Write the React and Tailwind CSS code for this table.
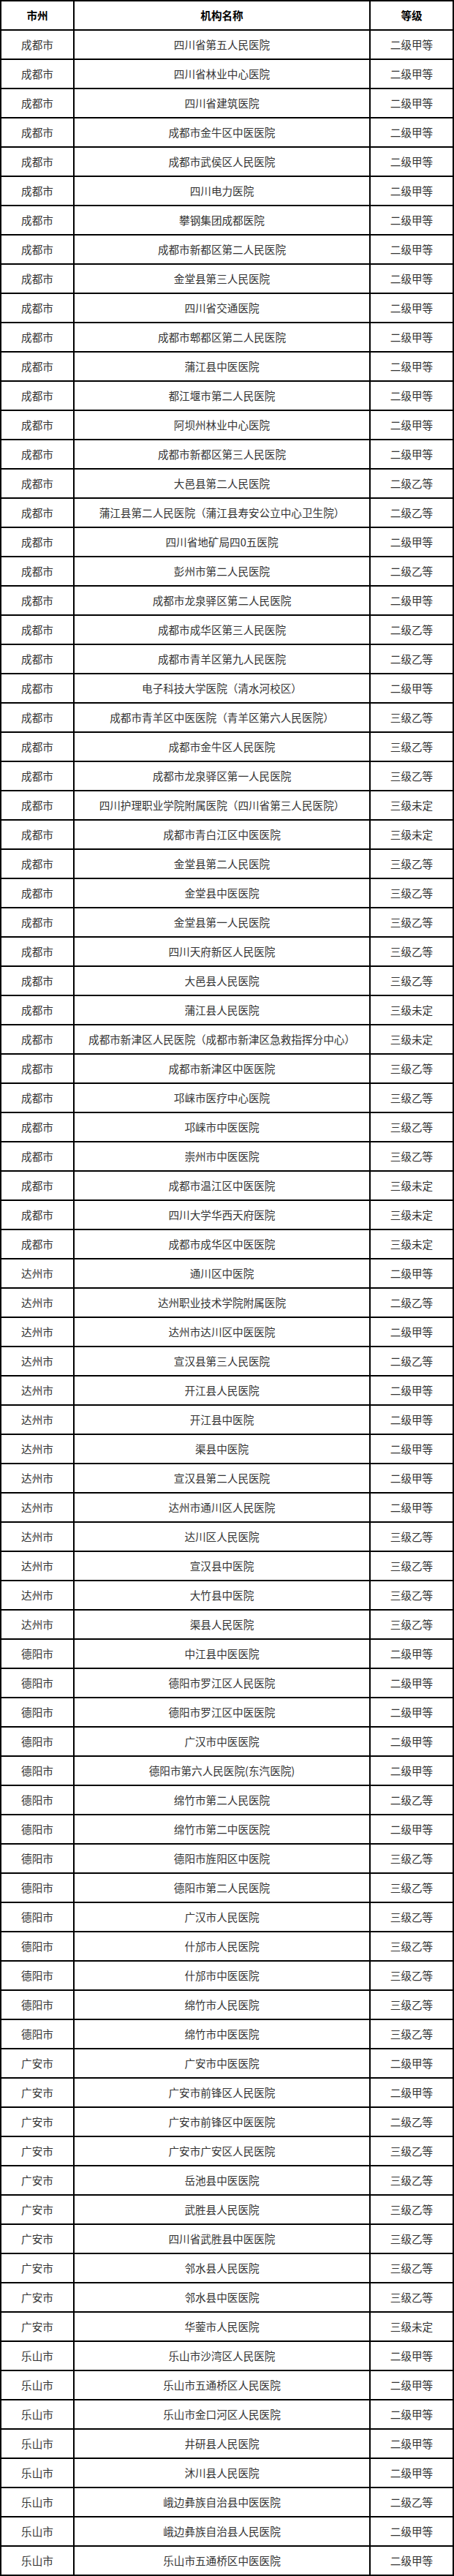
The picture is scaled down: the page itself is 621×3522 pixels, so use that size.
import React from 'react';

const rows = [
  ['成都市', '四川省第五人民医院', '二级甲等'],
  ['成都市', '四川省林业中心医院', '二级甲等'],
  ['成都市', '四川省建筑医院', '二级甲等'],
  ['成都市', '成都市金牛区中医医院', '二级甲等'],
  ['成都市', '成都市武侯区人民医院', '二级甲等'],
  ['成都市', '四川电力医院', '二级甲等'],
  ['成都市', '攀钢集团成都医院', '二级甲等'],
  ['成都市', '成都市新都区第二人民医院', '二级甲等'],
  ['成都市', '金堂县第三人民医院', '二级甲等'],
  ['成都市', '四川省交通医院', '二级甲等'],
  ['成都市', '成都市郫都区第二人民医院', '二级甲等'],
  ['成都市', '蒲江县中医医院', '二级甲等'],
  ['成都市', '都江堰市第二人民医院', '二级甲等'],
  ['成都市', '阿坝州林业中心医院', '二级甲等'],
  ['成都市', '成都市新都区第三人民医院', '二级甲等'],
  ['成都市', '大邑县第二人民医院', '二级乙等'],
  ['成都市', '蒲江县第二人民医院（蒲江县寿安公立中心卫生院）', '二级乙等'],
  ['成都市', '四川省地矿局四0五医院', '二级甲等'],
  ['成都市', '彭州市第二人民医院', '二级乙等'],
  ['成都市', '成都市龙泉驿区第二人民医院', '二级甲等'],
  ['成都市', '成都市成华区第三人民医院', '二级乙等'],
  ['成都市', '成都市青羊区第九人民医院', '二级乙等'],
  ['成都市', '电子科技大学医院（清水河校区）', '二级甲等'],
  ['成都市', '成都市青羊区中医医院（青羊区第六人民医院）', '三级乙等'],
  ['成都市', '成都市金牛区人民医院', '三级乙等'],
  ['成都市', '成都市龙泉驿区第一人民医院', '三级乙等'],
  ['成都市', '四川护理职业学院附属医院（四川省第三人民医院）', '三级未定'],
  ['成都市', '成都市青白江区中医医院', '三级未定'],
  ['成都市', '金堂县第二人民医院', '三级乙等'],
  ['成都市', '金堂县中医医院', '三级乙等'],
  ['成都市', '金堂县第一人民医院', '三级乙等'],
  ['成都市', '四川天府新区人民医院', '三级乙等'],
  ['成都市', '大邑县人民医院', '三级乙等'],
  ['成都市', '蒲江县人民医院', '三级未定'],
  ['成都市', '成都市新津区人民医院（成都市新津区急救指挥分中心）', '三级未定'],
  ['成都市', '成都市新津区中医医院', '三级乙等'],
  ['成都市', '邛崃市医疗中心医院', '三级乙等'],
  ['成都市', '邛崃市中医医院', '三级乙等'],
  ['成都市', '崇州市中医医院', '三级乙等'],
  ['成都市', '成都市温江区中医医院', '三级未定'],
  ['成都市', '四川大学华西天府医院', '三级未定'],
  ['成都市', '成都市成华区中医医院', '三级未定'],
  ['达州市', '通川区中医院', '二级甲等'],
  ['达州市', '达州职业技术学院附属医院', '二级乙等'],
  ['达州市', '达州市达川区中医医院', '二级甲等'],
  ['达州市', '宣汉县第三人民医院', '二级乙等'],
  ['达州市', '开江县人民医院', '二级甲等'],
  ['达州市', '开江县中医院', '二级甲等'],
  ['达州市', '渠县中医院', '二级甲等'],
  ['达州市', '宣汉县第二人民医院', '二级甲等'],
  ['达州市', '达州市通川区人民医院', '二级甲等'],
  ['达州市', '达川区人民医院', '三级乙等'],
  ['达州市', '宣汉县中医院', '三级乙等'],
  ['达州市', '大竹县中医院', '三级乙等'],
  ['达州市', '渠县人民医院', '三级乙等'],
  ['德阳市', '中江县中医医院', '二级甲等'],
  ['德阳市', '德阳市罗江区人民医院', '二级甲等'],
  ['德阳市', '德阳市罗江区中医医院', '二级甲等'],
  ['德阳市', '广汉市中医医院', '二级甲等'],
  ['德阳市', '德阳市第六人民医院(东汽医院)', '二级甲等'],
  ['德阳市', '绵竹市第二人民医院', '二级乙等'],
  ['德阳市', '绵竹市第二中医医院', '二级甲等'],
  ['德阳市', '德阳市旌阳区中医院', '三级乙等'],
  ['德阳市', '德阳市第二人民医院', '三级乙等'],
  ['德阳市', '广汉市人民医院', '三级乙等'],
  ['德阳市', '什邡市人民医院', '三级乙等'],
  ['德阳市', '什邡市中医医院', '三级乙等'],
  ['德阳市', '绵竹市人民医院', '三级乙等'],
  ['德阳市', '绵竹市中医医院', '三级乙等'],
  ['广安市', '广安市中医医院', '二级甲等'],
  ['广安市', '广安市前锋区人民医院', '二级甲等'],
  ['广安市', '广安市前锋区中医医院', '二级乙等'],
  ['广安市', '广安市广安区人民医院', '三级乙等'],
  ['广安市', '岳池县中医医院', '三级乙等'],
  ['广安市', '武胜县人民医院', '三级乙等'],
  ['广安市', '四川省武胜县中医医院', '三级乙等'],
  ['广安市', '邻水县人民医院', '三级乙等'],
  ['广安市', '邻水县中医医院', '三级乙等'],
  ['广安市', '华蓥市人民医院', '三级未定'],
  ['乐山市', '乐山市沙湾区人民医院', '二级甲等'],
  ['乐山市', '乐山市五通桥区人民医院', '二级甲等'],
  ['乐山市', '乐山市金口河区人民医院', '二级甲等'],
  ['乐山市', '井研县人民医院', '二级甲等'],
  ['乐山市', '沐川县人民医院', '二级甲等'],
  ['乐山市', '峨边彝族自治县中医医院', '二级乙等'],
  ['乐山市', '峨边彝族自治县人民医院', '二级甲等'],
  ['乐山市', '乐山市五通桥区中医医院', '二级甲等'],
];

const Row = ({ cells, head }) => (
  <div className={`flex h-[40px] border-b-2 border-black ${head ? 'font-bold text-black' : 'text-[#333]'}`}>
    <div className="w-[100px] shrink-0 flex items-center justify-center border-r-2 border-black">{cells[0]}</div>
    <div className="w-[405px] shrink-0 flex items-center justify-center border-r-2 border-black whitespace-nowrap">{cells[1]}</div>
    <div className="flex-1 flex items-center justify-center">{cells[2]}</div>
  </div>
);

export default function App() {
  return (
    <div
      className="w-[621px] bg-white border-t-2 border-x-2 border-black text-[14.6px] leading-none"
      style={{ fontFamily: '"Microsoft YaHei", "Noto Sans CJK SC", "Noto Sans", sans-serif' }}
    >
      <Row head cells={['市州', '机构名称', '等级']} />
      {rows.map((r, i) => (
        <Row key={i} cells={r} />
      ))}
    </div>
  );
}
